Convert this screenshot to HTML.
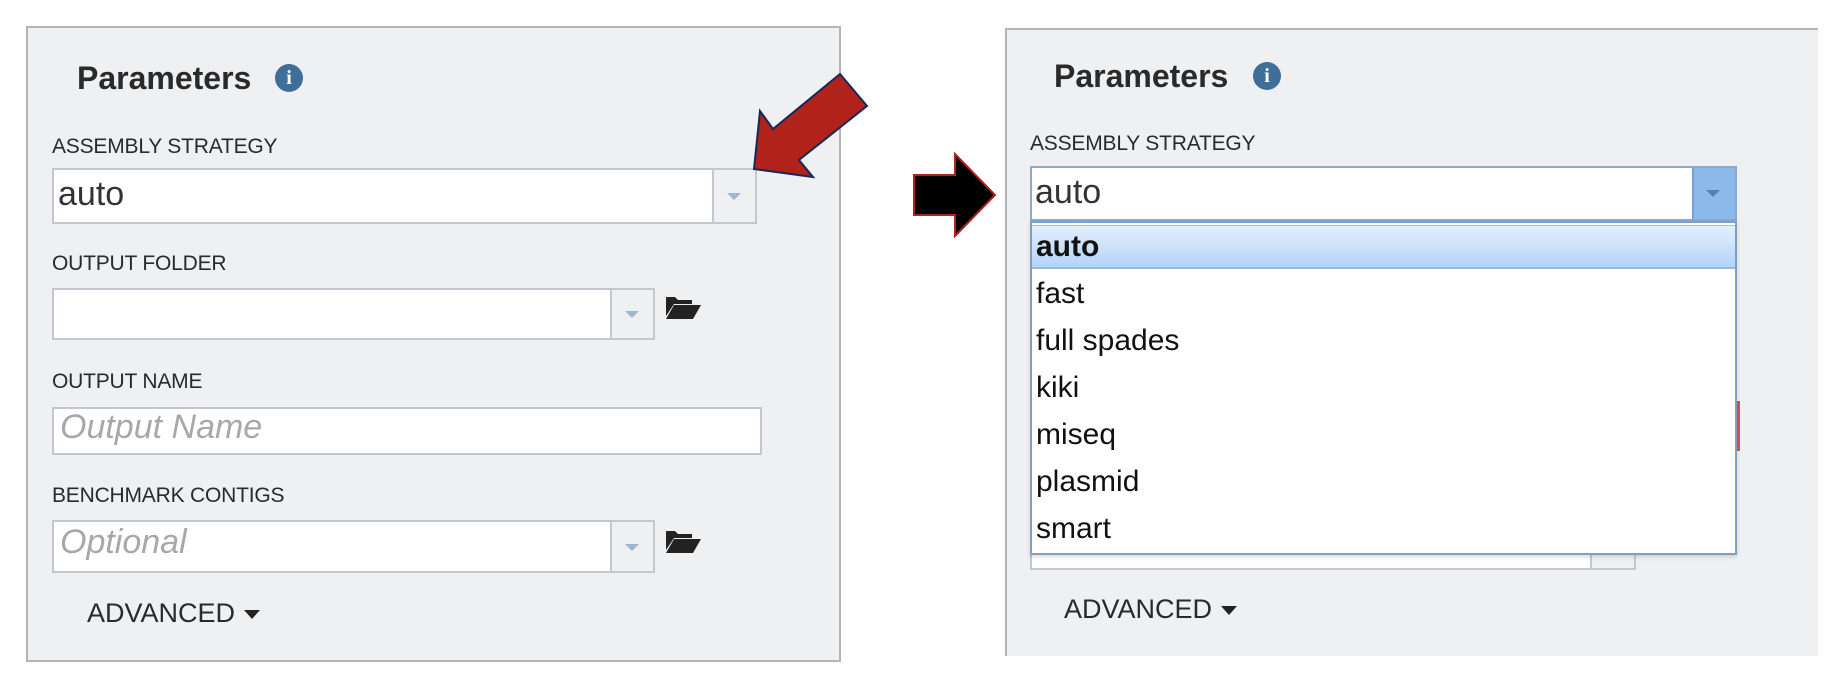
<!DOCTYPE html>
<html><head><meta charset="utf-8"><style>
*{box-sizing:border-box;margin:0;padding:0}
body{width:1848px;height:698px;background:#fff;position:relative;overflow:hidden;font-family:"Liberation Sans",Arial,sans-serif;color:#222}
.abs{position:absolute}
.panel{background:#eff0f2;border:2px solid #b5b5b5}
.title{font-size:32px;font-weight:bold;color:#2a2a2a}
.info{width:28px;height:28px;border-radius:50%;background:#3f6f98;color:#fff;font:bold 20px/28px "Liberation Serif",serif;text-align:center}
.lbl{font-size:21px;color:#2a2a2a;letter-spacing:-0.2px}
.box{background:#fff;border:2px solid #c3c8d0}
.btn{background:#eff0f2;border-left:2px solid #c3c8d0}
.tri{width:0;height:0;border-left:7px solid transparent;border-right:7px solid transparent;border-top:7px solid #a4b3ce}
.val{font-size:34px;color:#333}
.ph{font-size:34px;color:#a6a8ab;font-style:italic}
.adv{font-size:27px;color:#2a2a2a}
.opt{position:absolute;left:4px;font-size:30px;color:#111}
</style></head><body>

<div class="abs panel" style="left:26px;top:26px;width:815px;height:636px"></div>
<div class="abs title" style="left:77px;top:60px">Parameters</div>
<div class="abs info" style="left:275px;top:64px">i</div>
<div class="abs lbl" style="left:52px;top:135px">ASSEMBLY STRATEGY</div>
<div class="abs box" style="left:52px;top:168px;width:705px;height:56px"></div>
<div class="abs btn" style="left:712px;top:170px;width:43px;height:52px"></div>
<div class="abs tri" style="left:727px;top:193px"></div>
<div class="abs val" style="left:58px;top:175px">auto</div>

<div class="abs lbl" style="left:52px;top:252px">OUTPUT FOLDER</div>
<div class="abs box" style="left:52px;top:288px;width:603px;height:52px"></div>
<div class="abs btn" style="left:610px;top:290px;width:43px;height:48px"></div>
<div class="abs tri" style="left:625px;top:311px"></div>
<svg class="abs" style="left:665px;top:294px" width="36" height="26" viewBox="0 0 36 26"><path d="M1 3h9l3 3h14v4H9L1 22z" fill="#222"/><path d="M9 11h27l-8 14H1z" fill="#222"/></svg>

<div class="abs lbl" style="left:52px;top:370px">OUTPUT NAME</div>
<div class="abs box" style="left:52px;top:407px;width:710px;height:48px"></div>
<div class="abs ph" style="left:60px;top:408px">Output Name</div>

<div class="abs lbl" style="left:52px;top:484px">BENCHMARK CONTIGS</div>
<div class="abs box" style="left:52px;top:520px;width:603px;height:53px"></div>
<div class="abs btn" style="left:610px;top:522px;width:43px;height:49px"></div>
<div class="abs tri" style="left:625px;top:544px"></div>
<div class="abs ph" style="left:60px;top:523px">Optional</div>
<svg class="abs" style="left:665px;top:528px" width="36" height="26" viewBox="0 0 36 26"><path d="M1 3h9l3 3h14v4H9L1 22z" fill="#222"/><path d="M9 11h27l-8 14H1z" fill="#222"/></svg>
<div class="abs adv" style="left:87px;top:598px">ADVANCED</div>
<div class="abs tri" style="left:244px;top:610px;border-top:9px solid #222;border-left:8px solid transparent;border-right:8px solid transparent"></div>

<svg class="abs" style="left:0;top:0" width="1848" height="698">
<polygon points="754,169 760,111 773,129 840,74 867,106 799,160 813,177" fill="#b0221a" stroke="#14285a" stroke-width="2"/>
<polygon points="914,175 955,175 955,154 995,195 955,236 955,215 914,215" fill="#000" stroke="#b0221a" stroke-width="2"/>
</svg>

<div class="abs" style="left:1005px;top:28px;width:813px;height:628px;background:#eff0f2;border-left:2px solid #b5b5b5;border-top:2px solid #b5b5b5"></div>
<div class="abs title" style="left:1054px;top:58px">Parameters</div>
<div class="abs info" style="left:1253px;top:62px">i</div>
<div class="abs lbl" style="left:1030px;top:132px">ASSEMBLY STRATEGY</div>
<div class="abs" style="left:1732px;top:401px;width:8px;height:50px;background:#d9534f"></div>
<div class="abs box" style="left:1030px;top:520px;width:606px;height:50px"></div>
<div class="abs btn" style="left:1590px;top:522px;width:44px;height:46px"></div>
<div class="abs adv" style="left:1064px;top:594px">ADVANCED</div>
<div class="abs tri" style="left:1221px;top:606px;border-top:9px solid #222;border-left:8px solid transparent;border-right:8px solid transparent"></div>

<div class="abs box" style="left:1030px;top:166px;width:707px;height:55px;border-color:#8aaad0"></div>
<div class="abs" style="left:1692px;top:168px;width:43px;height:51px;background:#8ab9ea;border-left:2px solid #7aa0cc"></div>
<div class="abs tri" style="left:1706px;top:190px;border-top-color:#5c7ea8"></div>
<div class="abs val" style="left:1035px;top:173px">auto</div>

<div class="abs" style="left:1030px;top:221px;width:707px;height:334px;background:#fff;border:2px solid #7f9fc4;box-shadow:0 2px 4px rgba(0,0,0,.15)">
 <div class="abs" style="left:0;top:2px;width:703px;height:44px;background:linear-gradient(#e3effd,#b4d4f7);border-top:1px solid #9fbfe3;border-bottom:2px solid #94b9e2"></div>
 <div class="opt" style="top:7px;font-weight:bold">auto</div>
 <div class="opt" style="top:54px">fast</div>
 <div class="opt" style="top:101px">full spades</div>
 <div class="opt" style="top:148px">kiki</div>
 <div class="opt" style="top:195px">miseq</div>
 <div class="opt" style="top:242px">plasmid</div>
 <div class="opt" style="top:289px">smart</div>
</div>
</body></html>
